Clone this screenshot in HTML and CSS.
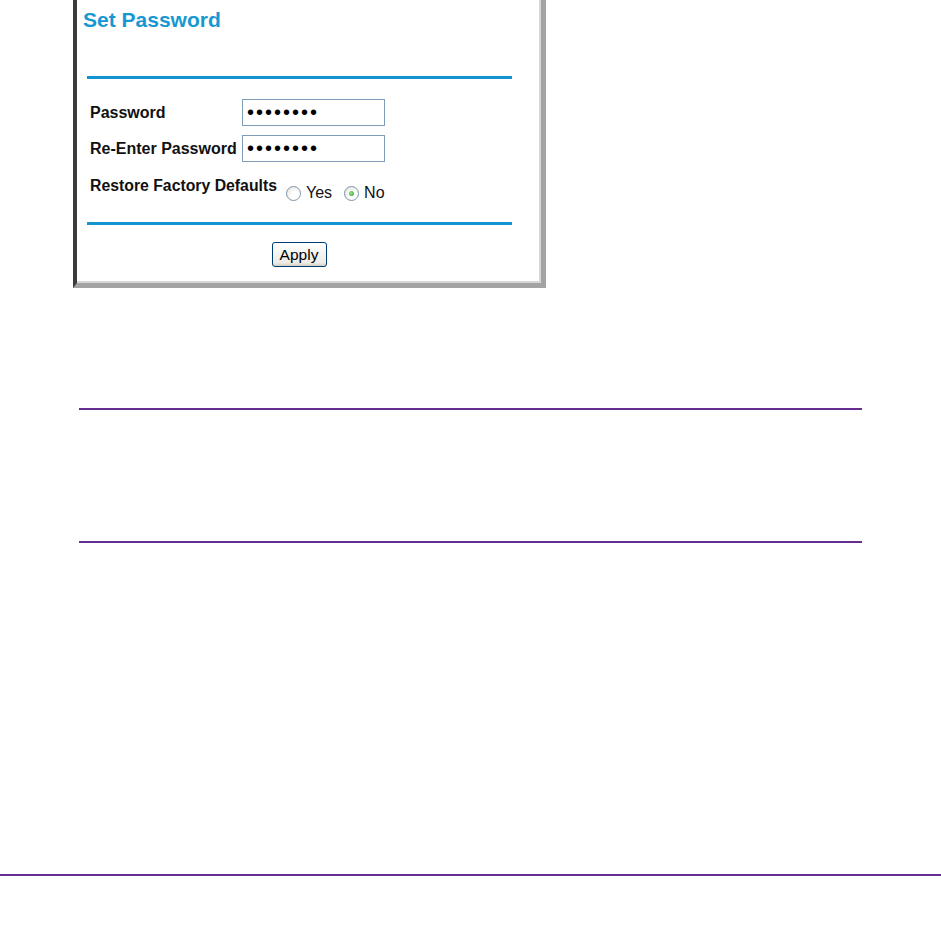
FILE: index.html
```html
<!DOCTYPE html>
<html lang="en">
<head>
    <meta charset="UTF-8">
    <title>Set Password</title>
    <link rel="stylesheet" href="styles.css">
</head>
<body>
    <div class="page">
        <div class="shot">
            <h1>Set Password</h1>
            <div class="rule rule-top"></div>

            <div class="fields">
                <label for="pw">Password</label>
                <input id="pw" type="password" value="abcdefgh" readonly>

                <label for="pw2">Re-Enter Password</label>
                <input id="pw2" type="password" value="abcdefgh" readonly>
            </div>

            <div class="restore">
                <span class="label">Restore Factory Defaults</span>
                <div class="choices">
                    <label class="choice"><input type="radio" name="restore"> Yes</label>
                    <label class="choice"><input type="radio" name="restore" checked> No</label>
                </div>
            </div>

            <div class="rule rule-bottom"></div>
            <div class="actions">
                <button type="button">Apply</button>
            </div>
        </div>

        <div class="note"></div>
    </div>

    <div class="footer-rule"></div>
</body>
</html>
```

FILE: styles.css
```css
* {
    margin: 0;
    padding: 0;
    box-sizing: border-box;
}

body {
    font-family: 'Liberation Sans', Arial, sans-serif;
    background: white;
    width: 941px;
    height: 942px;
    overflow: hidden;
}

.page {
    padding-left: 73px;
}

/* screenshot of the router page */
.shot {
    width: 473px;
    height: 288px;
    background: white;
    border-left: 4px solid #3b3b3b;
    border-right: 5px solid #a3a3a3;
    border-bottom: 5px solid #a3a3a3;
    box-shadow: inset -2px -2px 0 #d6d6d6;
    padding-left: 6px;
}

.shot h1 {
    color: #1898d2;
    font-size: 21px;
    font-weight: bold;
    line-height: 24px;
    padding-top: 8px;
}

.rule {
    height: 3px;
    background: #1394cf;
    width: 425px;
    margin-left: 4px;
}

.rule-top {
    margin-top: 44px;
}

.fields {
    display: grid;
    grid-template-columns: 152px 143px;
    row-gap: 9px;
    align-items: center;
    margin-top: 20px;
    padding-left: 7px;
}

.fields label,
.restore .label {
    font-size: 16px;
    font-weight: bold;
    color: #111;
}

.fields input {
    height: 27px;
    width: 143px;
    border: 1px solid #7f9db9;
    padding: 0 4px;
    font-family: 'Liberation Sans', Arial, sans-serif;
    font-size: 20px;
    letter-spacing: 2px;
    color: black;
    outline: none;
}

.restore {
    display: flex;
    align-items: flex-start;
    gap: 9px;
    height: 24px;
    margin-top: 14px;
    padding-left: 7px;
    white-space: nowrap;
}

.restore .label {
    font-size: 15.8px;
    line-height: 20px;
}

.choices {
    display: flex;
    gap: 12px;
    margin-top: 9px;
}

.choice {
    display: flex;
    align-items: center;
    gap: 5px;
    font-size: 16px;
    line-height: 16px;
    color: #111;
}

.choice input {
    appearance: none;
    width: 15px;
    height: 15px;
    border: 1px solid #7e95ab;
    border-radius: 50%;
    background: radial-gradient(circle at 65% 65%, #ffffff 35%, #dcdad2 100%);
    position: relative;
}

.choice input:checked::after {
    content: '';
    position: absolute;
    left: 4px;
    top: 4px;
    width: 5px;
    height: 5px;
    border-radius: 50%;
    background: radial-gradient(circle at 40% 40%, #9be887, #21a121);
}

.rule-bottom {
    margin-top: 22px;
}

.actions {
    display: flex;
    justify-content: center;
    padding-right: 26px;
    margin-top: 17px;
}

.actions button {
    width: 55px;
    height: 25px;
    border: 1px solid #003c74;
    border-radius: 3px;
    background: linear-gradient(#ffffff, #ecebe6 85%, #d6d0c5);
    font-family: 'Liberation Sans', Arial, sans-serif;
    font-size: 15.5px;
    color: black;
}

/* empty note box between two rules */
.note {
    width: 783px;
    height: 135px;
    margin-top: 120px;
    margin-left: 6px;
    border-top: 2px solid #662d91;
    border-bottom: 2px solid #662d91;
}

.footer-rule {
    margin-top: 331px;
    height: 2px;
    background: #662d91;
}
```
